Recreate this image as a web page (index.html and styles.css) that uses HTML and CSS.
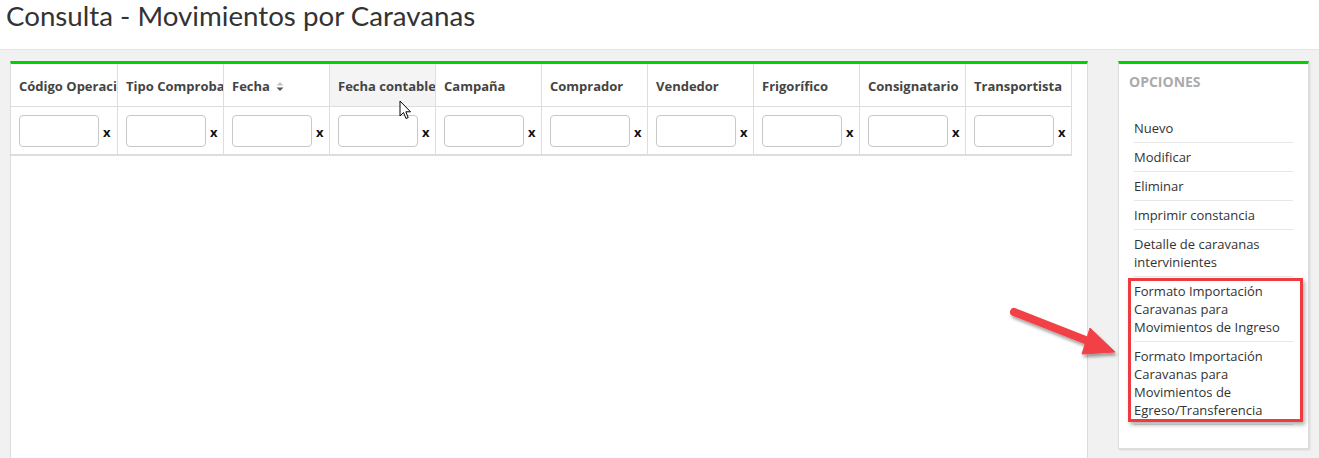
FILE: index.html
```html
<!DOCTYPE html>
<html lang="es">
<head>
<meta charset="utf-8">
<title>Consulta - Movimientos por Caravanas</title>
<link rel="stylesheet" href="styles.css">
</head>
<body>
<header class="page-header">
  <h1 class="page-title">Consulta - Movimientos por Caravanas</h1>
</header>
<main class="content">
  <section class="panel grid-panel">
    <table class="grid">
      <colgroup>
        <col class="col-first"><col><col><col><col><col><col><col><col><col>
      </colgroup>
      <thead>
        <tr class="head-row">
          <th>Código Operación</th>
          <th>Tipo Comprobante</th>
          <th><span class="sortable"><span>Fecha</span><svg class="sort-icon" width="8" height="11" viewBox="0 0 8 11"><path d="M0.5 4.5 L4 1 L7.5 4.5 Z" fill="#c4c4c4"/><path d="M0.5 6.5 L4 10 L7.5 6.5 Z" fill="#555"/></svg></span></th>
          <th class="is-hover">Fecha contable</th>
          <th>Campaña</th>
          <th>Comprador</th>
          <th>Vendedor</th>
          <th>Frigorífico</th>
          <th>Consignatario</th>
          <th>Transportista</th>
        </tr>
        <tr class="filter-row">
          <td><div class="filter"><input class="filter-input" type="text"><span class="filter-clear">x</span></div></td>
          <td><div class="filter"><input class="filter-input" type="text"><span class="filter-clear">x</span></div></td>
          <td><div class="filter"><input class="filter-input" type="text"><span class="filter-clear">x</span></div></td>
          <td><div class="filter"><input class="filter-input" type="text"><span class="filter-clear">x</span></div></td>
          <td><div class="filter"><input class="filter-input" type="text"><span class="filter-clear">x</span></div></td>
          <td><div class="filter"><input class="filter-input" type="text"><span class="filter-clear">x</span></div></td>
          <td><div class="filter"><input class="filter-input" type="text"><span class="filter-clear">x</span></div></td>
          <td><div class="filter"><input class="filter-input" type="text"><span class="filter-clear">x</span></div></td>
          <td><div class="filter"><input class="filter-input" type="text"><span class="filter-clear">x</span></div></td>
          <td><div class="filter"><input class="filter-input" type="text"><span class="filter-clear">x</span></div></td>
        </tr>
      </thead>
    </table>
  </section>
  <aside class="panel options-panel">
    <h2 class="options-title">Opciones</h2>
    <ul class="options-list">
      <li class="option">Nuevo</li>
      <li class="option">Modificar</li>
      <li class="option">Eliminar</li>
      <li class="option">Imprimir constancia</li>
      <li class="option">Detalle de caravanas intervinientes</li>
      <li class="option">Formato Importación Caravanas para Movimientos de Ingreso</li>
      <li class="option">Formato Importación Caravanas para Movimientos de Egreso/Transferencia</li>
    </ul>
  </aside>
</main>

<div class="highlight-box"></div>

<svg class="callout-arrow" width="130" height="70" viewBox="0 0 130 70">
  <defs>
    <filter id="arrowShadow" x="-20%" y="-20%" width="150%" height="160%">
      <feDropShadow dx="1.5" dy="3" stdDeviation="1.8" flood-color="#000" flood-opacity="0.35"/>
    </filter>
  </defs>
  <g filter="url(#arrowShadow)" fill="#f24146" stroke="#f24146">
    <line x1="14" y1="12" x2="88" y2="41" stroke-width="8" stroke-linecap="round"/>
    <path d="M90 28 L115 52 L82 54 Z" stroke-width="1" stroke-linejoin="round"/>
  </g>
</svg>

<svg class="cursor" width="14" height="21" viewBox="0 0 14 21">
  <path d="M1 1 L1 16 L4.5 12.5 L7 18.5 L9.2 17.6 L6.8 11.8 L11.5 11.8 Z" fill="#fff" stroke="#000" stroke-width="1" stroke-linejoin="round"/>
</svg>
</body>
</html>
```

FILE: styles.css
```css
* {
  box-sizing: border-box;
}

html, body {
  margin: 0;
  padding: 0;
}

body {
  background: #f1f1f1;
  font-family: "Open Sans", "Liberation Sans", Arial, sans-serif;
  font-size: 13px;
  color: #333;
  height: 458px;
  overflow: hidden;
  position: relative;
}

.page-header {
  background: #fff;
  height: 50px;
  border-bottom: 1px solid #e4e4e4;
  padding: 0 6px;
}

.page-title {
  margin: 0;
  font-family: Lato, "Open Sans", sans-serif;
  font-weight: 400;
  font-size: 27.7px;
  line-height: 32px;
  color: #333;
}

.content {
  display: grid;
  grid-template-columns: 1078px 191px;
  column-gap: 30px;
  padding: 11px 10px 0 10px;
  align-items: start;
}

.panel {
  background: #fff;
  border: 1px solid #dcdcdc;
  border-top: 3px solid #00d200;
}

.grid-panel {
  height: 397px;
  border-bottom: 0;
}

.grid {
  table-layout: fixed;
  border-collapse: separate;
  border-spacing: 0;
  width: 1061px;
}

.grid col {
  width: 106px;
}

.grid .col-first {
  width: 107px;
}

.grid th,
.grid td {
  border-right: 1px solid #dedede;
  overflow: hidden;
  white-space: nowrap;
  text-align: left;
  padding: 0 0 0 8px;
}

.head-row th {
  font-weight: 700;
  color: #444;
  font-size: 13px;
  line-height: 18px;
  padding-top: 13px;
  padding-bottom: 11px;
  border-bottom: 1px solid #dedede;
}

.head-row th.is-hover {
  background: #f4f4f4;
}

.sortable {
  display: inline-flex;
  align-items: center;
  gap: 6px;
}

.sort-icon {
  display: block;
}

.filter-row td {
  padding-top: 8px;
  padding-bottom: 7px;
  border-bottom: 2px solid #dddddd;
}

.filter {
  display: flex;
  align-items: center;
  gap: 4px;
}

.filter-input {
  width: 80px;
  height: 32px;
  border: 1px solid #c8c8c8;
  border-radius: 4px;
  background: #fff;
  margin: 0;
  padding: 0 6px;
  font: inherit;
}

.filter-clear {
  font-weight: 700;
  font-size: 13px;
  color: #111;
  padding-top: 2px;
}

.options-panel {
  height: 388px;
  box-shadow: 1px 1px 2px rgba(0, 0, 0, 0.12);
}

.options-title {
  margin: 0;
  padding: 9px 10px 0 10px;
  font-size: 14px;
  line-height: 18px;
  font-weight: 700;
  color: #ababab;
  text-transform: uppercase;
}

.options-list {
  list-style: none;
  margin: 23px 15px 0 15px;
  padding: 0;
}

.option {
  padding: 5px 0;
  line-height: 18px;
  border-bottom: 1px solid #e6e6e6;
  color: #333;
}

.highlight-box {
  position: absolute;
  left: 1128px;
  top: 278px;
  width: 175px;
  height: 144px;
  border: 3px solid #ef3a40;
  box-shadow: 2px 3px 4px rgba(0, 0, 0, 0.3);
}

.callout-arrow {
  position: absolute;
  left: 1000px;
  top: 300px;
}

.cursor {
  position: absolute;
  left: 399px;
  top: 100px;
}
```
